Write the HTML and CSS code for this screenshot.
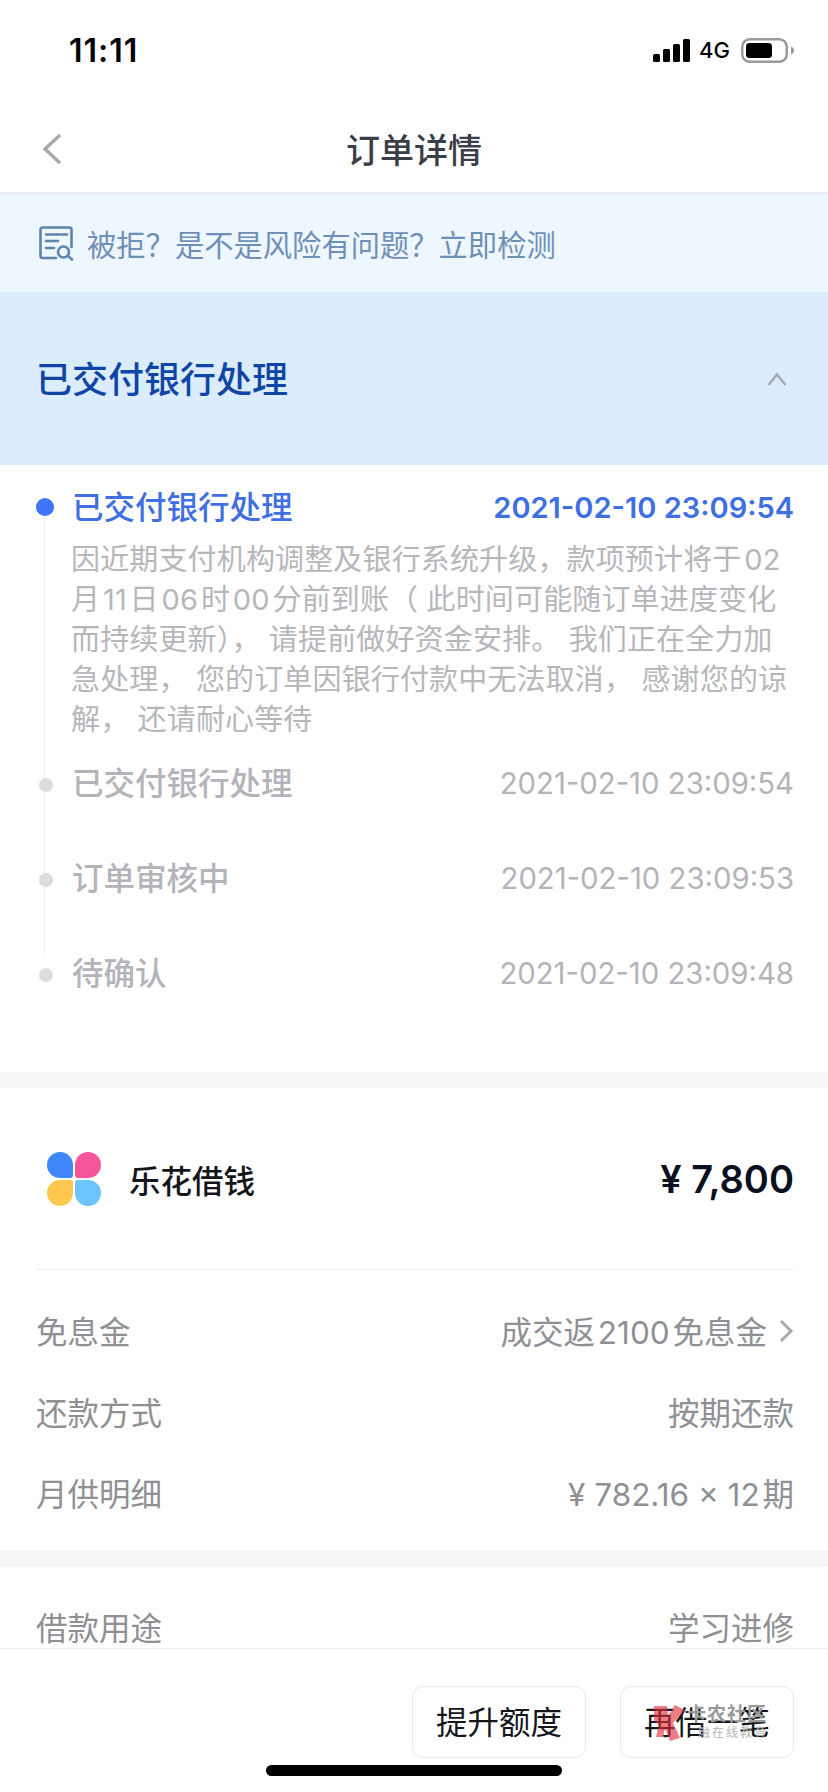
FILE: index.html
```html
<!DOCTYPE html>
<html lang="zh-CN">
<head>
<meta charset="utf-8">
<title>订单详情</title>
<link rel="stylesheet" href="styles.css">
</head>
<body>
<div class="app">
  <main class="scroll">
    <header class="status">
      <span class="clock">11:11</span>
      <div class="status-right">
        <svg class="signal" width="37" height="23" viewBox="0 0 37 23"><rect x="0" y="15" width="7" height="8" rx="1.5"/><rect x="10" y="10" width="7" height="13" rx="1.5"/><rect x="20" y="5" width="7" height="18" rx="1.5"/><rect x="30" y="0" width="7" height="23" rx="1.5"/></svg>
        <span class="net">4G</span>
        <svg class="battery" width="53" height="25" viewBox="0 0 53 25"><rect x="1.25" y="1.25" width="44.5" height="22.5" rx="7.5" fill="none" stroke="#9a9a9a" stroke-width="2.5"/><rect x="5" y="5" width="26" height="15" rx="3.5" fill="#000"/><path d="M50 8.5c2 .8 3 2.2 3 4s-1 3.2-3 4z" fill="#9a9a9a"/></svg>
      </div>
    </header>
    <nav class="nav">
      <svg class="back" width="20" height="32" viewBox="0 0 20 32"><path d="M18 2 3 16l15 14" fill="none" stroke="#a9a9a9" stroke-width="3.4"/></svg>
      <h1 class="nav-title">订单详情</h1>
    </nav>
    <div class="notice">
      <svg class="notice-icon" width="35" height="35" viewBox="0 0 35 35" fill="none" stroke="#5f85ad" stroke-width="2.6" stroke-linecap="round"><path d="M17 32H3.500A2 2 0 0 1 1.500 30V3.500A2 2 0 0 1 3.500 1.500h27a2 2 0 0 1 2 2V21"/><path d="M7 8.500h21M7 15h12M7 22h8"/><circle cx="24.500" cy="26" r="5.500"/><path d="m29 30 4 3.500"/></svg>
      <span class="notice-text">被拒&#xFF1F;是不是风险有问题&#xFF1F;立即检测</span>
    </div>
    <div class="state">
      <h2 class="state-title">已交付银行处理</h2>
      <svg class="fold" width="20" height="14" viewBox="0 0 20 14"><path d="M1.500 13 10 2.500 18.500 13" fill="none" stroke="#a3a9b2" stroke-width="2.4"/></svg>
    </div>

    <section class="timeline">
      <div class="step step-active">
        <span class="dot"></span>
        <span class="step-name">已交付银行处理</span>
        <time class="step-time">2021-02-10 23:09:54</time>
      </div>
      <p class="step-desc">因近期支付机构调整及银行系统升级&#xFF0C;款项预计将于&#8202;02<br>月&#8202;11&#8202;日&#8202;06&#8202;时&#8202;00&#8202;分前到账&#xFF08; 此时间可能随订单进度变化<br>而持续更新&#xFF09;&#xFF0C; 请提前做好资金安排。 我们正在全力加<br>急处理&#xFF0C; 您的订单因银行付款中无法取消&#xFF0C; 感谢您的谅<br>解&#xFF0C; 还请耐心等待</p>
      <div class="step">
        <span class="dot"></span>
        <span class="step-name">已交付银行处理</span>
        <time class="step-time">2021-02-10 23:09:54</time>
      </div>
      <div class="step">
        <span class="dot"></span>
        <span class="step-name">订单审核中</span>
        <time class="step-time">2021-02-10 23:09:53</time>
      </div>
      <div class="step">
        <span class="dot"></span>
        <span class="step-name">待确认</span>
        <time class="step-time">2021-02-10 23:09:48</time>
      </div>
    </section>

    <section class="card">
      <div class="product">
        <svg class="logo" width="54" height="54" viewBox="0 0 54 54">
          <path fill="#3f86fb" d="M13 0a13 13 0 0 1 13 13v10a3 3 0 0 1-3 3H13A13 13 0 0 1 13 0z"/>
          <path fill="#f7559a" d="M41 0a13 13 0 0 0-13 13v10a3 3 0 0 0 3 3h10a13 13 0 0 0 0-26z"/>
          <path fill="#fec850" d="M13 54a13 13 0 0 0 13-13V31a3 3 0 0 0-3-3H13a13 13 0 0 0 0 26z"/>
          <path fill="#6cc4fe" d="M41 54a13 13 0 0 1-13-13V31a3 3 0 0 1 3-3h10a13 13 0 0 1 0 26z"/>
        </svg>
        <span class="product-name">乐花借钱</span>
        <span class="amount">¥ 7,800</span>
      </div>
      <div class="rule"></div>
      <div class="rows">
        <div class="row"><span>免息金</span><span class="row-link"><span>成交返&#8202;2100&#8202;免息金</span><svg class="more" width="15" height="24" viewBox="0 0 15 24"><path d="m2 2 10 10L2 22" fill="none" stroke="#a9abae" stroke-width="3"/></svg></span></div>
        <div class="row"><span>还款方式</span><span>按期还款</span></div>
        <div class="row"><span>月供明细</span><span>¥ 782.16 × 12&#8202;期</span></div>
      </div>
    </section>

    <section class="card card-next">
      <div class="rows rows-next">
        <div class="row"><span>借款用途</span><span>学习进修</span></div>
      </div>
    </section>
  </main>

  <footer class="actions">
    <button class="btn" type="button">提升额度</button>
    <button class="btn" type="button">再借一笔</button>
    <div class="stamp">
      <svg class="stamp-mark" width="32" height="36" viewBox="0 0 32 36"><path fill="#e0313c" fill-opacity=".62" d="M1 1h13l1 10 7-11 10 5-12 13 7 15-10 3-5-13-2 9H3l3-13-5-3z"/></svg>
      <span class="stamp-name">卡农社区</span>
      <span class="stamp-sub">融在线教育</span>
    </div>
    <span class="home"></span>
  </footer>
</div>
</body>
</html>
```

FILE: styles.css
```css
* { box-sizing: border-box; margin: 0; padding: 0; }

html, body { width: 828px; height: 1792px; overflow: hidden; background: #fff; }

body {
  font-family: Inter, "Noto Sans CJK SC", "Noto Sans", sans-serif;
  font-size: 31.5px;
  color: #8e9094;
}

.app { display: flex; flex-direction: column; height: 1792px; }

.scroll { flex: 1; min-height: 0; overflow: hidden; }

/* status bar */
.status {
  display: flex;
  align-items: center;
  justify-content: space-between;
  height: 100px;
  padding: 0 34px 0 69px;
  color: #000;
}
.clock { font-size: 32px; font-weight: 600; letter-spacing: 1px; }
.status-right { display: flex; align-items: center; }
.net { margin: 0 11px 0 9px; font-size: 22px; font-weight: 500; }
.battery { display: block; }

/* navigation */
.nav {
  position: relative;
  display: flex;
  align-items: center;
  justify-content: center;
  height: 94px;
  padding-top: 4px;
  border-bottom: 2px solid #ececee;
}
.back { position: absolute; left: 42px; top: 33px; }
.nav-title { font-size: 34px; font-weight: 500; color: #3a3e48; }

/* risk notice */
.notice {
  display: flex;
  align-items: center;
  gap: 13px;
  height: 98px;
  padding-left: 39px;
  background: #eef6fe;
}
.notice-text { font-size: 29.3px; color: #6f90b6; }

/* current state */
.state {
  display: flex;
  align-items: center;
  justify-content: space-between;
  height: 173px;
  padding: 0 41px 4px 36px;
  background: #dbecfd;
}
.fold { margin-top: 4px; }
.state-title { font-size: 36px; font-weight: 500; color: #0f46a5; }

/* progress timeline */
.timeline {
  position: relative;
  padding: 20px 34px 77px 73px;
}
.timeline::before {
  content: "";
  position: absolute;
  left: 44px;
  top: 52px;
  height: 440px;
  width: 1px;
  background: #eeeef0;
}
.step {
  position: relative;
  display: flex;
  align-items: center;
  justify-content: space-between;
  height: 44px;
  margin-top: 51px;
}
.step:first-child { margin-top: 0; }
.step-desc + .step { margin-top: 21px; }
.dot {
  position: absolute;
  left: -34px;
  top: 17px;
  width: 14px;
  height: 14px;
  border-radius: 50%;
  background: #dcdde0;
}
.step-name { padding-bottom: 4px; margin-left: -1px; font-size: 31.5px; font-weight: 500; color: #b3b4ba; }
.step-time { font-size: 29.3px; color: #b3b4b9; }
.step-active .dot { left: -37px; top: 13px; width: 18px; height: 18px; background: #3f75f6; }
.step-active .step-name { color: #3f6fe0; }
.step-active .step-time { font-size: 29px; color: #3f6fe0; font-weight: 600; }
.step-desc {
  margin: 11px 0 0 -2px;
  font-size: 29px;
  line-height: 40px;
  letter-spacing: .15px;
  white-space: nowrap;
  color: #b6b7bb;
}

/* loan summary */
.card { border-top: 16px solid #f6f6f6; }
.product {
  display: flex;
  align-items: center;
  height: 181px;
  padding: 0 34px 0 47px;
}
.logo { flex: none; }
.product-name { margin-left: 28px; font-size: 31.5px; font-weight: 500; color: #14161c; }
.amount { margin-left: auto; font-size: 38px; font-weight: 600; color: #0b1020; }
.rule { height: 1px; margin: 0 34px 0 36px; background: #eeeeef; }
.rows { padding: 19px 34px 19px 36px; }
.rows-next { padding-top: 18px; }
.row { display: flex; align-items: center; justify-content: space-between; height: 81px; }
.row-link { display: flex; align-items: center; gap: 12px; }
.more { display: block; margin-top: 2px; }

/* bottom action bar */
.actions {
  position: relative;
  flex: none;
  display: flex;
  justify-content: flex-end;
  gap: 34px;
  height: 144px;
  padding: 37px 34px 0 0;
  border-top: 1px solid #eeeeef;
  background: #fff;
}
.btn {
  width: 174px;
  height: 72px;
  padding-bottom: 4px;
  border: 1px solid #e9e9eb;
  border-radius: 11px;
  background: transparent;
  font: 400 31.5px Inter, "Noto Sans CJK SC", sans-serif;
  color: #14161c;
}

/* site stamp drawn across the last button */
.stamp { position: absolute; left: 653px; top: 56px; width: 116px; height: 36px; pointer-events: none; }
.stamp-mark { position: absolute; left: 0; top: 0; }
.stamp-name { position: absolute; right: 2px; top: 0; font-size: 19px; line-height: 20px; font-weight: 700; color: #9a9a9a; letter-spacing: 1px; }
.stamp-sub { position: absolute; right: 1px; top: 20px; font-size: 12px; line-height: 16px; color: #b4b4b4; letter-spacing: 2px; }

.home {
  position: absolute;
  left: 266px;
  top: 116px;
  width: 296px;
  height: 11px;
  border-radius: 6px;
  background: #000;
}
```
